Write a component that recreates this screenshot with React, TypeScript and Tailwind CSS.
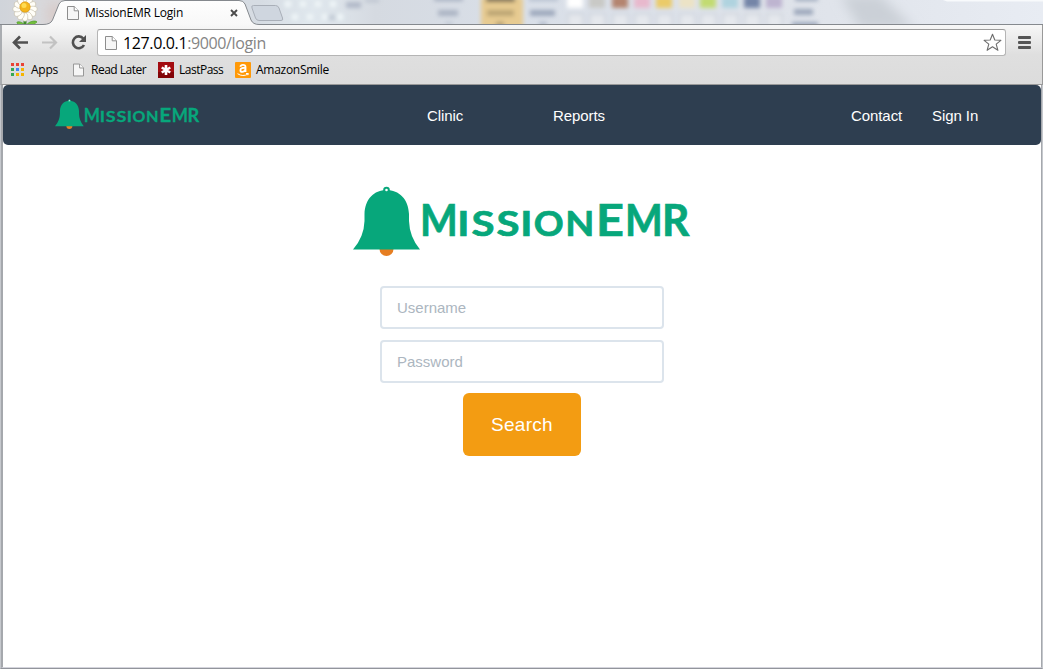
import React from 'react';

function PageIcon({ className }: { className: string }) {
  return (
    <svg viewBox="0 0 12 14" className={className}>
      <path d="M.5.5h6.7l4.3 4.3v8.7H.5z" fill="#f6f6f6" stroke="#8d8d8d" />
      <path d="M7.2.5v4.3h4.3" fill="#fff" stroke="#8d8d8d" />
    </svg>
  );
}

const swatches = [
  { x: 568, c: '#ffffff' }, { x: 590, c: '#c9c9c6' }, { x: 613, c: '#b48470' },
  { x: 635, c: '#e8b9cd' }, { x: 657, c: '#ebcb69' }, { x: 680, c: '#ece3c6' },
  { x: 701, c: '#c2db72' }, { x: 723, c: '#afd3df' }, { x: 745, c: '#7485a7' }, { x: 767, c: '#beb4d0' },
];

function Backdrop() {
  return (
    <svg width="1043" height="25" viewBox="0 0 1043 25" className="absolute inset-0">
      <defs>
        <filter id="haze" filterUnits="userSpaceOnUse" x="250" y="-10" width="600" height="45"><feGaussianBlur stdDeviation="1.9" /></filter>
        <filter id="soft" x="-50%" y="-50%" width="200%" height="200%"><feGaussianBlur stdDeviation="6" /></filter>
        <linearGradient id="glass" x1="0" x2="1" y1="0" y2="0">
          <stop offset="0" stopColor="#d0d4da" /><stop offset=".04" stopColor="#d8d8db" />
          <stop offset=".25" stopColor="#d6dce3" /><stop offset=".3" stopColor="#e2e9ef" />
          <stop offset=".36" stopColor="#d5dae1" /><stop offset=".5" stopColor="#d9dfe8" />
          <stop offset=".77" stopColor="#dfe3ea" /><stop offset="1" stopColor="#e8ecf3" />
        </linearGradient>
        <linearGradient id="tab" x1="0" x2="0" y1="0" y2="1">
          <stop offset="0" stopColor="#fefefe" /><stop offset="1" stopColor="#f7f7f7" />
        </linearGradient>
      </defs>
      <rect width="1043" height="25" fill="url(#glass)" />
      <path d="M840-5h40l35 34h-55z" fill="#cbd0d7" filter="url(#soft)" />
      <ellipse cx="55" cy="14" rx="7" ry="12" fill="#d9bfb8" opacity=".6" filter="url(#soft)" />
      <g filter="url(#haze)">
        {[288, 303, 318, 333].map((x) => (
          <g key={x} fill="#eef4f7" stroke="#c4d0da" strokeWidth="1">
            <circle cx={x} cy="4" r="5" /><circle cx={x + 7} cy="17" r="5" />
          </g>
        ))}
        <g fill="#a6afc0">
          <rect x="346" y="2" width="15" height="6" opacity=".8" />
          <rect x="365" y="-1" width="14" height="3" opacity=".6" />
          <rect x="328" y="15" width="8" height="5" opacity=".5" />
          <rect x="434" y="-3" width="29" height="4" />
          <rect x="438" y="10" width="20" height="6" opacity=".9" />
          <rect x="445" y="22" width="8" height="3" opacity=".5" />
        </g>
        <rect x="481" y="-3" width="42" height="34" fill="#e7cb91" />
        <rect x="486" y="-3" width="29" height="5" fill="#76684e" />
        <rect x="487" y="10" width="27" height="6" fill="#bba473" />
        <rect x="496" y="22" width="8" height="4" fill="#ab966e" />
        <g fill="#9da8bc">
          <rect x="529" y="-3" width="29" height="4" opacity=".6" />
          <rect x="530" y="10" width="25" height="6" />
          <rect x="539" y="22" width="8" height="4" opacity=".7" />
          <rect x="795" y="-3" width="23" height="4" />
          <rect x="794" y="9" width="19" height="6" />
          <rect x="792" y="22" width="26" height="5" />
        </g>
        {swatches.map((s) => (
          <g key={s.x}>
            <rect x={s.x - 1} y="-4" width="16" height="12" fill={s.c} />
            <rect x={s.x} y="14" width="15" height="14" fill="#e5e8ed" stroke="#c1c8d2" />
          </g>
        ))}
      </g>
      <path d="M943 0h100v1.500H947z" fill="#f8fafc" />
      <g transform="translate(25 9)">
        <path d="M0 7v18" stroke="#3f8c2a" strokeWidth="3" />
        <path d="M0 16c-5-5-9-3-8-2 2 2 4 7 8 7M1 17c2-5 10-6 11-4-3 1-3 7-11 10" fill="#72bd3b" stroke="#4e9c2a" strokeWidth=".7" />
        {[0, 30, 60, 90, 120, 150, 180, 210, 240, 270, 300, 330].map((a) => (
          <ellipse key={a} cx="0" cy="-8" rx="2.800" ry="4.200" transform={`rotate(${a})`} fill="#fffef8" stroke="#c5bda8" strokeWidth=".6" />
        ))}
        <circle r="5.200" cy="-2" fill="#f4b61d" stroke="#d99508" strokeWidth=".6" />
        <circle cx="-1" cy="-3.500" r="2.500" fill="#ffdc51" />
      </g>
      <path d="M253.500 5.500h22q2.500 0 3.500 2.500l3.500 10q1 2.500-1.500 2.500h-22q-2.500 0-3.500-2.500l-3.500-10q-1-2.500 1.500-2.500z" fill="#cfd6df" stroke="#a9afb8" />
      <path d="M0 24.500H43Q50.500 24.500 52.500 20L59 4Q60.500.5 65 .5H239Q243.500.5 245 4L251 20Q253 24.500 259 24.500H1043V27H0z" fill="url(#tab)" stroke="#85898e" />
    </svg>
  );
}

function TabStrip() {
  return (
    <div className="relative h-[25px] shrink-0 overflow-hidden">
      <Backdrop />
      <div className="relative flex h-full items-center pl-[67px] text-[12px] text-black">
        <PageIcon className="h-[14px] w-[12px]" />
        <span className="ml-[6px] w-[143px] whitespace-nowrap tracking-[-0.200px]">MissionEMR Login</span>
        <svg viewBox="0 0 8 8" className="ml-[2px] h-[8px] w-[8px]"><path d="M1 1l6 6M7 1L1 7" stroke="#4b4b4b" strokeWidth="1.900" /></svg>
      </div>
    </div>
  );
}

function Toolbar() {
  return (
    <div className="flex h-[32px] shrink-0 items-start pl-[10px] pt-[4px]">
      <svg width="82" height="26" viewBox="0 0 82 26" fill="none">
        <path d="M18 13.500H4M10 7.500l-6 6 6 6" stroke="#505050" strokeWidth="2.600" />
        <path d="M32 13.500h14M40 7.500l6 6-6 6" stroke="#c2c2c2" strokeWidth="2.200" />
        <path d="M73.300 9.500A5.900 5.900 0 1 0 74 16" stroke="#505050" strokeWidth="2.600" />
        <path d="M76 6v7h-7z" fill="#505050" />
      </svg>
      <div className="ml-[5px] flex h-[27px] w-[909px] items-center rounded-[3px] border border-[#b5b5b5] border-t-[#9b9b9b] bg-white pl-[7px] pr-[3px]">
        <PageIcon className="h-[16px] w-[12px]" />
        <span className="ml-[6px] flex-1 whitespace-nowrap text-[16px] leading-[24px] tracking-[-0.370px] text-[#858585]">
          <span className="text-black">127.0.0.1</span>:9000/login
        </span>
        <svg width="19" height="19" viewBox="0 0 19 19">
          <path d="M9.500 1.300l2.300 5.700 6.100.3-4.700 3.900 1.700 6.100-5.400-3.500-5.400 3.500 1.700-6.100L1.100 7.300 7.200 7z" fill="#fff" stroke="#6d6d6d" strokeWidth="1.100" strokeLinejoin="round" />
        </svg>
      </div>
      <div className="ml-[12px] mt-[7px] flex w-[13px] flex-col gap-[2px]">
        <i className="h-[3px] rounded-[1px] bg-[#555]" />
        <i className="h-[3px] rounded-[1px] bg-[#555]" />
        <i className="h-[3px] rounded-[1px] bg-[#555]" />
      </div>
    </div>
  );
}

const dots = ['#e94235', '#e94235', '#e94235', '#35a853', '#4285f4', '#f5b400', '#35a853', '#f5b400', '#f5b400'];

function Bookmarks() {
  return (
    <div className="flex h-[25px] shrink-0 items-center pl-[11px] text-[12px] text-black">
      <svg width="13" height="13" viewBox="0 0 13 13">
        {dots.map((c, i) => <rect key={i} x={(i % 3) * 5} y={Math.floor(i / 3) * 5} width="3" height="3" fill={c} />)}
      </svg>
      <span className="ml-[7px] w-[42px] whitespace-nowrap tracking-[-0.250px]">Apps</span>
      <PageIcon className="h-[14px] w-[11px]" />
      <span className="ml-[7px] w-[67px] whitespace-nowrap tracking-[-0.500px]">Read Later</span>
      <svg width="16" height="16" viewBox="0 0 16 16">
        <rect width="16" height="16" fill="#a30c10" /><rect y="10" width="16" height="6" fill="#820407" />
        <path d="M8 3v10M3.700 5.500l8.600 5M12.300 5.500l-8.600 5" stroke="#fff" strokeWidth="2.600" />
      </svg>
      <span className="ml-[5px] w-[56px] whitespace-nowrap tracking-[-0.500px]">LastPass</span>
      <svg width="16" height="16" viewBox="0 0 16 16">
        <rect width="16" height="16" rx="1" fill="#ff9908" />
        <path d="M5.300 4.700Q5.700 2.800 8 2.800q2.500 0 2.500 2.200v5M10.500 5.800Q5.400 5.500 5.400 8.200q0 1.700 1.800 1.700Q9.500 9.900 10.500 7.200" fill="none" stroke="#fff" strokeWidth="1.800" />
        <path d="M2.500 11.700q5.500 3.500 10.500.3M11 11.500h2.400l-.5 1.700" fill="none" stroke="#fff" strokeWidth="1" />
      </svg>
      <span className="ml-[5px] whitespace-nowrap tracking-[-0.270px]">AmazonSmile</span>
    </div>
  );
}

const letters = [
  { ch: 'M', x: 67, sx: 0.93, size: 43 },
  { ch: 'I', x: 104.3, sx: 1.18, size: 35 },
  { ch: 'S', x: 118.4, sx: 1.2, size: 35 },
  { ch: 'S', x: 143.4, sx: 1.2, size: 35 },
  { ch: 'I', x: 167.3, sx: 1.18, size: 35 },
  { ch: 'O', x: 180.7, sx: 1.06, size: 35 },
  { ch: 'N', x: 212.2, sx: 1.08, size: 35 },
  { ch: 'E', x: 243, sx: 1.13, size: 43 },
  { ch: 'M', x: 272, sx: 0.93, size: 43 },
  { ch: 'R', x: 309.1, sx: 0.99, size: 43 },
];

function Logo({ className, baseline = 50.3 }: { className: string; baseline?: number }) {
  return (
    <svg viewBox="0 0 338 72" className={className}>
      <circle cx="33.500" cy="63" r="7" fill="#e67e22" />
      <path d="M0 63.500Q11 51 11.500 35V28C12 13 21 4 33.500 4s22 9 22.500 24v7Q56.500 51 67 63.500z" fill="#07a77b" />
      <circle cx="33.500" cy="4" r="2.300" fill="#fff" stroke="#07a77b" strokeWidth="2" />
      <g fill="#07a77b" stroke="#07a77b" strokeWidth=".7" fontFamily="Lato" fontWeight="700">
        {letters.map((l) => (
          <text key={l.x} fontSize={l.size} transform={`translate(${l.x} ${baseline}) scale(${l.sx} 1)`}>{l.ch}</text>
        ))}
      </g>
    </svg>
  );
}

function NavBar() {
  return (
    <nav className="flex h-[60px] items-center rounded-[5px] bg-[#2e3e50] text-[15px] tracking-[-0.080px] text-white">
      <Logo className="-mt-[1px] ml-[52px] h-[31px] w-[145px]" baseline={53.8} />
      <a className="ml-[227px] w-[126px] whitespace-nowrap pt-[2px]">Clinic</a>
      <a className="w-[298px] whitespace-nowrap pt-[2px]">Reports</a>
      <a className="w-[81px] whitespace-nowrap pt-[2px]">Contact</a>
      <a className="whitespace-nowrap pt-[2px]">Sign In</a>
    </nav>
  );
}

function LoginForm() {
  const field = 'h-[43px] w-[284px] rounded-[4px] border-2 border-[#dce4ec] bg-white px-[15px] text-[15px] outline-none placeholder:text-[#acb6c0] placeholder:opacity-100';
  return (
    <form className="flex flex-col items-center" onSubmit={(e) => e.preventDefault()}>
      <input className={field} placeholder="Username" />
      <input className={`${field} mt-[11px]`} type="password" placeholder="Password" />
      <button className="mt-[10px] h-[63px] w-[118px] rounded-[6px] bg-[#f39c12] pt-[1px] text-[19px] tracking-[0.300px] text-white">Search</button>
    </form>
  );
}

export default function App() {
  return (
    <div className="flex h-[669px] w-[1043px] flex-col overflow-hidden bg-white font-['Liberation_Sans',sans-serif]">
      <header className="flex flex-col font-['Open_Sans',sans-serif]">
        <TabStrip />
        <div className="flex h-[60px] flex-col border-b border-l-2 border-r border-b-[#999] border-l-[#aaadb1] border-r-[#999] bg-linear-to-b from-[#f7f7f7] via-[#dfdfdf] to-[#dcdcdc]">
          <div className="-ml-[2px] flex flex-col"><Toolbar /><Bookmarks /></div>
        </div>
      </header>
      <div className="flex flex-1 border-x border-b border-x-[#c5c8cd] border-b-[#92959c]">
        <main className="flex flex-1 flex-col border-b border-l-2 border-r border-b-[#d5d5dd] border-l-[#a5a8ad] border-r-[#a5a8ad] bg-white">
          <NavBar />
          <div className="flex flex-col items-center pt-[41px]">
            <Logo className="mb-[28px] h-[72px] w-[338px]" />
            <LoginForm />
          </div>
        </main>
      </div>
    </div>
  );
}
